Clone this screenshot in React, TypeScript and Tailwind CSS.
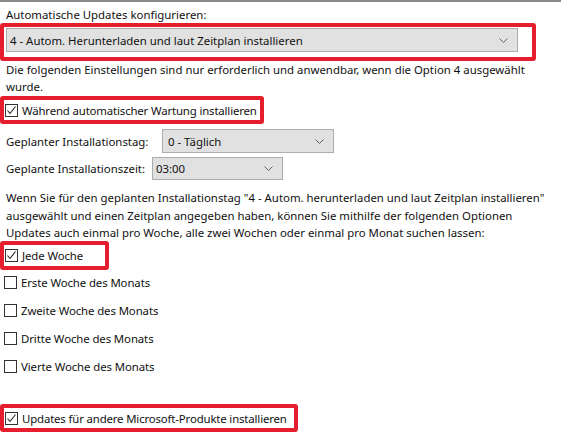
import React from "react";

function Check({ checked }: { checked?: boolean }) {
  return (
    <span className="w-[13px] h-[13px] border border-[#333333] bg-white flex items-center justify-center shrink-0">
      {checked && (
        <svg width="11" height="11" viewBox="0 0 11 11">
          <path d="M1.5 5.5 L4 8.5 L9.5 1.5" fill="none" stroke="#222" strokeWidth="1.1" />
        </svg>
      )}
    </span>
  );
}

function Chevron() {
  return (
    <svg width="9" height="5" viewBox="0 0 9 5">
      <path d="M0.5 0.5 L4.5 4.5 L8.5 0.5" fill="none" stroke="#606060" strokeWidth="1" />
    </svg>
  );
}

function Select({ text, className }: { text: string; className: string }) {
  return (
    <div
      className={
        "bg-[#e1e1e1] border border-[#adadad] flex items-center justify-between pl-[3px] pr-[9px] " + className
      }
    >
      <span>{text}</span>
      <Chevron />
    </div>
  );
}

function CheckRow({ checked, label }: { checked?: boolean; label: string }) {
  return (
    <div className="flex items-center gap-[4px] h-[18px] pl-[4px]">
      <Check checked={checked} />
      <span className="tracking-[-0.1px]">{label}</span>
    </div>
  );
}

export default function App() {
  return (
    <div className="w-[561px] h-[445px] bg-white border-t-2 border-[#8a8a8a] text-[11.4px] text-[#111] overflow-hidden font-['Segoe_UI','Noto_Sans',sans-serif] leading-[17px] whitespace-nowrap">
      <div className="pl-[6px] pt-[4px] h-[21px]">Automatische Updates konfigurieren:</div>
      <div className="w-[536px] h-[38px] border-[4px] border-[#e51d2c] rounded-[3px] pl-[2px] pt-[1px]">
        <Select text="4 - Autom. Herunterladen und laut Zeitplan installieren" className="w-[512px] h-[24px]" />
      </div>
      <div className="pl-[6px] h-[35px]">
        <div>Die folgenden Einstellungen sind nur erforderlich und anwendbar, wenn die Option 4 ausgewählt</div>
        <div>wurde.</div>
      </div>
      <div className="w-[264px] h-[28px] border-[4px] border-[#e51d2c] rounded-[3px] flex items-center pl-[1px] gap-[4px]">
        <Check checked />
        <span className="tracking-[-0.15px]">Während automatischer Wartung installieren</span>
      </div>
      <div className="flex items-center mt-[5px] h-[24px]">
        <span className="w-[162px] pl-[6px]">Geplanter Installationstag:</span>
        <Select text="0 - Täglich" className="w-[172px] h-[24px] pl-[5px]" />
      </div>
      <div className="flex items-center mt-[4px] h-[23px]">
        <span className="w-[152px] pl-[6px]">Geplante Installationszeit:</span>
        <Select text="03:00" className="w-[131px] h-[23px]" />
      </div>
      <div className="pl-[6px] mt-[9px] h-[52px] leading-[17.5px]">
        <div>Wenn Sie für den geplanten Installationstag "4 - Autom. herunterladen und laut Zeitplan installieren"</div>
        <div>ausgewählt und einen Zeitplan angegeben haben, können Sie mithilfe der folgenden Optionen</div>
        <div>Updates auch einmal pro Woche, alle zwei Wochen oder einmal pro Monat suchen lassen:</div>
      </div>
      <div className="w-[109px] h-[29px] border-[4px] border-[#e51d2c] rounded-[3px] flex items-center pl-[1px] gap-[4px]">
        <Check checked />
        <span className="tracking-[-0.1px]">Jede Woche</span>
      </div>
      <div className="flex flex-col gap-[10px] mt-[3px]">
        <CheckRow label="Erste Woche des Monats" />
        <CheckRow label="Zweite Woche des Monats" />
        <CheckRow label="Dritte Woche des Monats" />
        <CheckRow label="Vierte Woche des Monats" />
      </div>
      <div className="mt-[29px] w-[298px] h-[28px] border-[4px] border-[#e51d2c] rounded-[3px] flex items-center pl-[1px] gap-[4px]">
        <Check checked />
        <span className="tracking-[-0.15px]">Updates für andere Microsoft-Produkte installieren</span>
      </div>
    </div>
  );
}
